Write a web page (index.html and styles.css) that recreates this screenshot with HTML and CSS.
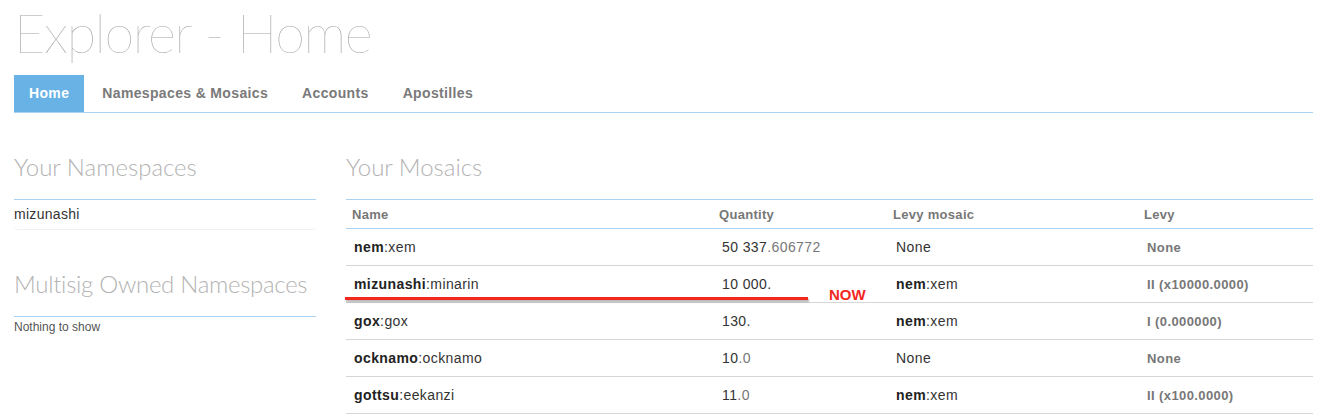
FILE: index.html
```html
<!DOCTYPE html>
<html lang="en">
<head>
    <meta charset="UTF-8">
    <meta name="viewport" content="width=device-width, initial-scale=1.0">
    <title>Explorer - Home</title>
    <link rel="stylesheet" href="styles.css">
</head>
<body>

    <div class="page">
        <h1 class="page-title">Explorer - Home</h1>

        <ul class="tabs">
            <li class="tab active">Home</li>
            <li class="tab">Namespaces &amp; Mosaics</li>
            <li class="tab">Accounts</li>
            <li class="tab">Apostilles</li>
        </ul>

        <div class="columns">
            <div class="side">
                <h3 class="section-title">Your Namespaces</h3>
                <ul class="ns-list">
                    <li>mizunashi</li>
                </ul>

                <h3 class="section-title multisig">Multisig Owned Namespaces</h3>
                <p class="empty">Nothing to show</p>
            </div>

            <div class="main">
                <h3 class="section-title">Your Mosaics</h3>
                <div class="table-wrap">
                    <table class="mosaics">
                        <colgroup>
                            <col class="c-name">
                            <col class="c-qty">
                            <col class="c-levy-mosaic">
                            <col>
                        </colgroup>
                        <thead>
                            <tr>
                                <th>Name</th>
                                <th>Quantity</th>
                                <th>Levy mosaic</th>
                                <th>Levy</th>
                            </tr>
                        </thead>
                        <tbody>
                            <tr>
                                <td><b>nem</b>:xem</td>
                                <td>50 337<span class="frac">.606772</span></td>
                                <td>None</td>
                                <td class="levy">None</td>
                            </tr>
                            <tr>
                                <td><b>mizunashi</b>:minarin</td>
                                <td>10 000.</td>
                                <td><b>nem</b>:xem</td>
                                <td class="levy">II (x10000.0000)</td>
                            </tr>
                            <tr>
                                <td><b>gox</b>:gox</td>
                                <td>130.</td>
                                <td><b>nem</b>:xem</td>
                                <td class="levy">I (0.000000)</td>
                            </tr>
                            <tr>
                                <td><b>ocknamo</b>:ocknamo</td>
                                <td>10<span class="frac">.0</span></td>
                                <td>None</td>
                                <td class="levy">None</td>
                            </tr>
                            <tr>
                                <td><b>gottsu</b>:eekanzi</td>
                                <td>11<span class="frac">.0</span></td>
                                <td><b>nem</b>:xem</td>
                                <td class="levy">II (x100.0000)</td>
                            </tr>
                        </tbody>
                    </table>
                    <!-- annotation drawn over the screenshot -->
                    <div class="mark-line"></div>
                    <div class="mark-now">NOW</div>
                </div>
            </div>
        </div>
    </div>

</body>
</html>
```

FILE: styles.css
```css
body {
    margin: 0;
    padding: 0;
    font-family: "Liberation Sans", Arial, sans-serif;
    color: #333;
    background-color: #fff;
}

.page {
    padding: 0 4px 0 14px;
}

.page-title {
    margin: 3px 0 12px;
    font-family: Lato, "Open Sans", sans-serif;
    font-weight: 100;
    font-size: 54px;
    line-height: 60px;
    letter-spacing: -1.4px;
    color: #a4a4a4;
}

.tabs {
    display: flex;
    margin: 0;
    padding: 0;
    list-style: none;
    border-bottom: 1px solid #a9d3f0;
}

.tab {
    height: 37px;
    line-height: 37px;
    padding: 0 16px;
    margin-right: 2px;
    font-size: 14px;
    font-weight: bold;
    letter-spacing: 0.35px;
    color: #7a7a7a;
}

.tab.active {
    padding: 0 15px;
    background-color: #68b2e5;
    color: #fff;
}

.columns {
    display: grid;
    grid-template-columns: 302px 1fr;
    gap: 30px;
    margin-top: 38px;
}

.section-title {
    margin: 0 0 17px;
    font-family: Lato, "Open Sans", sans-serif;
    font-weight: 300;
    font-size: 24px;
    line-height: 31px;
    white-space: nowrap;
    color: #b3b3b3;
}

.section-title.multisig {
    margin-top: 38px;
    letter-spacing: -0.3px;
}

.ns-list {
    margin: 0;
    padding: 0;
    list-style: none;
    border-top: 1px solid #a9d3f0;
}

.ns-list li {
    padding: 5px 0 6px;
    font-size: 14px;
    line-height: 18px;
    letter-spacing: 0.3px;
    border-bottom: 1px solid #f1f1f1;
    border-radius: 0 0 4px 4px;
}

.empty {
    margin: 0;
    padding-top: 3px;
    border-top: 1px solid #a9d3f0;
    font-size: 12px;
    color: #555;
}

.table-wrap {
    position: relative;
}

.mosaics {
    width: 100%;
    border-collapse: collapse;
    border-top: 1px solid #a9d3f0;
    font-size: 14px;
    letter-spacing: 0.4px;
}

.c-name {
    width: 367px;
}

.c-qty {
    width: 174px;
}

.c-levy-mosaic {
    width: 251px;
}

.mosaics th {
    height: 28px;
    padding: 0 6px;
    text-align: left;
    font-size: 13px;
    letter-spacing: 0.3px;
    color: #777;
    border-bottom: 1px solid #a9d3f0;
}

.mosaics td {
    height: 36px;
    padding: 0 8px;
    border-bottom: 1px solid #d6d6d6;
}

.mosaics td:nth-child(n+2) {
    padding-left: 9px;
}

.mosaics b {
    color: #222;
}

.frac {
    color: #777;
}

.mosaics td.levy {
    font-size: 13px;
    font-weight: bold;
    color: #777;
}

.mark-line {
    position: absolute;
    left: -1px;
    top: 98px;
    width: 463px;
    height: 3px;
    background-color: #f2281f;
    box-shadow: 1px 2px 2px rgba(0, 0, 0, 0.3);
}

.mark-now {
    position: absolute;
    left: 483px;
    top: 87px;
    font-size: 15px;
    font-weight: bold;
    color: #f2281f;
}
```
